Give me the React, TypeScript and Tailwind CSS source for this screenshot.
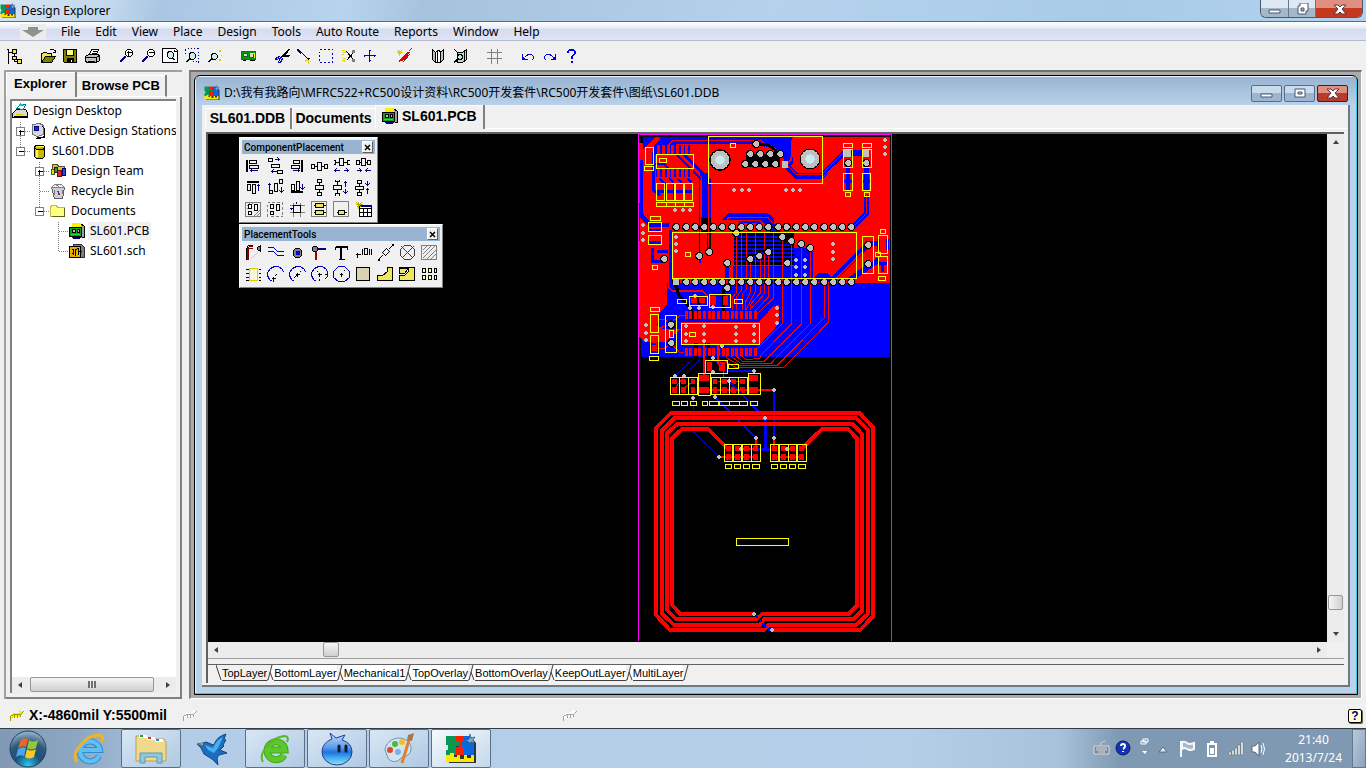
import type { ReactNode } from "react";

// [path, stroke, fill]
type Shape = [string, string, string?];

const K = "#000000";
const N = "#000080";
const G = "#808080";
const Y = "#f0e65a";

const uiFont = "font-['Noto_Sans','Noto_Sans_CJK_SC',sans-serif]";
const boldFont = "font-['Liberation_Sans',sans-serif] font-bold";

function Icon({ shapes, size = 16 }: { shapes: Shape[]; size?: number }) {
  return (
    <svg
      width={size}
      height={size}
      viewBox={`-0.5 -0.5 ${size} ${size}`}
      shapeRendering="crispEdges"
      className="shrink-0"
      aria-hidden
    >
      {shapes.map(([d, stroke, fill], i) => (
        <path key={i} d={d} stroke={stroke} fill={fill ?? "none"} />
      ))}
    </svg>
  );
}

const lens = "M7 3l2 -2h3l2 2v3l-2 2h-3l-2 -2z";

const toolIcons: Record<string, Shape[]> = {
  tree: [
    ["M2 0V15M0 1H2M2 4H6M8 5V13H11M8 9H6", K],
    ["M6 1h4v4h-4zM6 8h4v3h-4zM11 11h4v4h-4z", K, Y],
  ],
  open: [
    ["M1 14V5h1l1 -1h3l1 1h4v3", K, Y],
    ["M1 14l4 -6h10l-4 6z", K, "#808000"],
    ["M9 2l1 -1h3l2 2M15 1V4H12", K],
  ],
  save: [
    ["M1 1h13v13h-12l-1 -1z", K, "#808000"],
    ["M4 1h7v6h-7z", K, "#ffff80"],
    ["M5 14v-4h6v4M6 11v3M7 11v3", K, K],
    ["M9 11v2", "#fff"],
  ],
  print: [
    ["M5 6l2 -5h7l-2 5z", K, "#fff"],
    ["M1 8l3 -2h10l1 2v4l-3 2h-10l-1 -2z", K, "#c0c0c0"],
    ["M1 9h11l3 -2M8 3h4M7 5h4M12 9v5M3 13h7", K],
    ["M9 11h2", "#d0d000"],
  ],
  zoomIn: [
    [lens, K, "#fff"],
    ["M10 2v5M8 4h5", K],
    ["M7 8l-6 6M7 9l-5 5M6 8l-5 5", N],
  ],
  zoomOut: [
    [lens, K, "#fff"],
    ["M8 4h5", K],
    ["M7 8l-6 6M7 9l-5 5M6 8l-5 5", N],
  ],
  zoomPage: [
    ["M0 0h13l2 2v12h-15z", K, "#fff"],
    ["M5 4l2 -1h2l2 2v3l-2 2h-2l-2 -2zM10 9l3 3M10 10l2 2M12 1v2h2", K, "#c8f0f0"],
  ],
  zoomArea: [
    ["M3 0h1M6 0h1M9 0h1M12 0h2M14 3v1M14 6v1M14 9v1M14 12v2M11 13h1M8 13h1M1 0v2M1 4v1", N],
    ["M6 4h3l2 2v3l-2 2h-3l-1 -2v-3zM5 10l-4 4M5 11l-3 3", K, "#c8f0f0"],
  ],
  zoomPoint: [
    ["M6 5h3l2 2v2l-2 2h-3l-1 -2v-2zM5 10l-4 4M5 11l-3 3", K, "#c8f0f0"],
    ["M12 2h2M12 3h2M12 11h2M12 12h2M14 7h1", "#e0d000"],
  ],
  chip: [
    ["M1 3h14v8h-14z", "#008000", "#00a000"],
    ["M3 5h4v3h-4zM9 5h4v4h-4z", "#305030", "#d8d8d8"],
    ["M2 12h3M9 12h5", K],
    ["M9 5h4M14 4v5", "#ffff00"],
  ],
  cut: [
    ["M14 1l-7 7M15 1l-7 8M15 7h-5l-4 2M14 8h-5", K],
    ["M6 8l-4 1l-1 2h2l3 -2M6 9l-2 5h2l2 -4", "#0000c0"],
  ],
  probe: [
    ["M1 1l5 4M1 2l4 4M2 1l6 6", N],
    ["M7 6l5 5l1 -1M12 9v3", K],
    ["M10 11l-1 3M12 12v3M8 12h4M13 13h1", "#e0d800"],
  ],
  select: [["M1 1h2M5 1h2M9 1h2M13 1h1M14 4v2M14 8v2M14 12v2M11 14h-2M7 14h-2M3 14h-2M1 12v-2M1 8v-2M1 4v-1", "#0000c0"]],
  deselect: [
    ["M6 3l8 9M6 12l8 -9", K],
    ["M1 2h3M2 4h3M1 6h2M1 12h3M2 10h3M3 13h1", "#e0d800"],
    ["M12 2h2v2h-2zM12 11h2v2h-2z", G, G],
  ],
  move: [["M7 1V13M1 7H13M6 2h2M6 12h2M2 6v2M12 6v2", "#0000c0"]],
  wizard: [
    ["M3 13l8 -9M4 13l8 -9M4 12l6 -7M5 13l8 -9M6 12l7 -8", "#e00000"],
    ["M2 14l2 -3M12 3l3 -3M6 14l7 -8", "#404040"],
    ["M3 1v6M0 4h6M1 2l4 4M5 2l-4 4", "#d8d000"],
  ],
  book: [
    ["M2 1l3 3v10l-3 -3zM13 1l-3 3v10l3 -3z", K, "#c0c0c0"],
    ["M5 4l2 -2h2l1 2v10h-5z", K, "#fff"],
    ["M7 2v12", K],
  ],
  bookFind: [
    ["M2 1l3 3v10h5l4 -3v-10l-4 3h-5M14 1v10M12 3v9", K, "#d0d0d0"],
    ["M6 6h3l1 2v2l-2 1h-2l-1 -2zM5 10l-4 4M6 11l-4 3", K, "#a0f0f0"],
  ],
  grid: [["M5 0V15M11 0V15M0 4H15M0 10H15", G]],
  undo: [["M2 5v6h5M2 10l2 -1l2 -2l2 -1h3l2 2v2l-2 2M3 8v3M4 9v2", "#0000d8"]],
  redo: [["M13 5v6h-5M13 10l-2 -1l-2 -2l-2 -1h-3l-2 2v2l2 2M12 8v3M11 9v2", "#0000d8"]],
  help: [["M3 4v-1l2 -2h4l2 2v2l-3 3v2M4 4v-1l1 -1h4l1 1v2l-3 3v2M7 12v2M8 12v2", "#0000f0"]],
};

const toolGroups = [
  ["tree"],
  ["open", "save", "print"],
  ["zoomIn", "zoomOut", "zoomPage", "zoomArea", "zoomPoint"],
  ["chip"],
  ["cut", "probe", "select", "deselect", "move"],
  ["wizard"],
  ["book", "bookFind"],
  ["grid"],
  ["undo", "redo", "help"],
];

const componentIcons: Shape[][] = [
  [["M2 2v12M1 2v12M4 3h7v3h-7zM4 8h9v3h-9z", K], ["M5 13h7M5 13l2 -2M5 13l2 2", N]],
  [["M1 1h4v3h-4zM4 7h8v3h-8zM10 13h5v3h-5z", K], ["M7 2h5M10 0l2 2l-2 2M4 14h5M6 12l-2 2l2 2", N]],
  [["M13 2v12M12 2v12M4 3h6v3h-6zM2 8h8v3h-8z", K], ["M3 13h7M10 13l-2 -2M10 13l-2 2", N]],
  [["M0 7h3v4h-3zM6 5h4v8h-4zM13 7h3v4h-3zM3 9h3M10 9h3", K]],
  [["M6 1h4v7h-4zM0 3h2v4h-2M16 3h-2v4h2M2 5h4M10 5h4", K], ["M1 13h5M1 13l2 -2M1 13l2 2M10 13h5M15 13l-2 -2M15 13l-2 2", N]],
  [["M1 3h3v4h-3zM6 1h4v7h-4zM12 3h3v4h-3zM4 5h2M10 5h2", K], ["M1 13h5M6 13l-2 -2M6 13l-2 2M10 13h5M10 13l2 -2M10 13l2 2", N]],
  [["M1 2h12M1 3h12M2 5h3v6h-3zM7 5h3v9h-3z", K], ["M13 5v6M11 7l2 -2l2 2", N]],
  [["M2 11h3v3h-3zM7 4h3v8h-3zM12 0h3v4h-3z", K], ["M2 4v6M0 6l2 -2l2 2M14 7v6M12 11l2 2l2 -2", N]],
  [["M1 13h12M1 12h12M2 5h3v6h-3zM7 2h3v9h-3z", K], ["M13 4v6M11 8l2 2l2 -2", N]],
  [["M6 0h4v3h-4zM4 6h8v4h-8zM6 13h4v3h-4zM8 3v3M8 10v3", K]],
  [["M2 0v2h4v-2M0 6h8v4h-8zM2 16v-2h4v2M4 2v4M4 10v4", K], ["M12 2v5M10 4l2 -2l2 2M12 9v5M10 12l2 2l2 -2", N]],
  [["M2 1h4v3h-4zM0 7h8v3h-8zM2 13h4v3h-4zM4 4v3M4 10v3", K], ["M12 1v5M10 4l2 2l2 -2M12 9v5M10 11l2 -2l2 2", N]],
  [["M0 1h15v14h-15zM1 8l7 -7M8 15l7 -7M11 15l4 -4M1 5l4 -4", G], ["M3 3h3v4h-3zM9 3h3v6h-3zM3 10h3v3h-3z", K, "#fff"]],
  [["M0 1h2M4 1h3M9 1h3M14 1h1v2M15 5v3M15 10v3M15 15h-2M11 15h-3M6 15h-3M0 15v-3M0 10v-3M0 5v-2", G], ["M3 3h3v4h-3zM9 3h3v6h-3zM3 10h3v3h-3z", K]],
  [["M4 1v14M11 1v14M0 4h15M0 11h15", G], ["M4 4h7v7h-7z", K, "#f0f0f0"], ["M0 7h3M7 0v2M2 6v2", N]],
  [["M0 0h15v15h-15z", G, "#f0f0f0"], ["M4 2h8v4h-8zM4 9h8v4h-8zM2 4h2M12 4h2M2 11h2M12 11h2", K, Y]],
  [["M0 0h15v15h-15z", G, "#f0f0f0"], ["M5 9h6v4h-6zM3 11h2M11 11h2", K, Y]],
  [["M4 4h12v11h-12zM4 7h12M8 7v8M12 7v8M4 11h12", K, "#fff"], ["M4 4h12M4 5h12", N], ["M3 0v7M0 3h7M1 1l5 5M6 1l-5 5", "#b8b000"]],
];

const placementIcons: Shape[][] = [
  [["M2 15v-11l2 -2h3M3 15v-11h4", "#800000"], ["M1 15v-11l2 -3h4", K], ["M15 1l-3 2v2l3 2z", K, G], ["M12 8l-7 7", "#e8e000"]],
  [["M0 3h6l4 4h6M0 7h6l4 4h6", "#0000c0"]],
  [["M6 4h4l2 2v5l-2 2h-4l-2 -2v-5z", K, G], ["M7 7h3v3h-3z", "#0000c0", "#0000ff"]],
  [["M2 2h3l1 1v3l-1 1h-3l-1 -1v-3z", K, G], ["M6 4h8v1h-8z", N, N], ["M4 8v7h1v-7z", "#a00000"]],
  [["M2 2h12v3M2 2v3M8 2v13M7 2v13M5 15h6M2 3h12", K]],
  [["M0 10h5M2 8v5M7 4v6M9 4h3v6h-3zM14 4v6M16 4v6", K]],
  [["M1 15l4 -4M11 5l4 -4M5 8l4 -4l3 3l-4 4z", K], ["M0 15h2v1h-2M14 0h2v1", K]],
  [["M5 1h6l4 4v6l-4 4h-6l-4 -4v-6zM2 2l12 12M14 2l-12 12", "#404040"]],
  [["M0 1h15v14h-15z", G], ["M1 6l5 -5M1 10l9 -9M1 14l13 -13M5 15l10 -10M9 15l6 -6", G]],
  [["M4 2h8v12h-8z", "#d8d000", "#f8f8d8"], ["M0 3h3M0 7h3M0 11h3M0 14h3M13 3h2M13 7h2M13 11h2M13 14h2", K]],
  [["M5 15l-3 -2l-2 -4v-3l3 -4l4 -2h4l4 3l1 3", "#0000c0"], ["M4 12h4M6 10v5M7 10l2 -2", K]],
  [["M5 15l-3 -2l-2 -4v-3l3 -4l4 -2h4l4 3l1 3", "#0000c0"], ["M6 8h4M8 6v4M4 12l3 -3M10 6l1 -1", K]],
  [["M5 15l-3 -2l-2 -4v-3l3 -4l4 -2h4l4 3l1 3v4l-3 3", "#0000c0"], ["M6 8h4M8 6v4M13 8h2M8 12v2M6 4v1", K]],
  [["M5 0h6l5 5v6l-5 4h-6l-5 -4v-6z", "#0000c0"], ["M6 8h3M8 6v4M10 5l1 -1", K]],
  [["M1 1h13v13h-13z", K, "#d8d4b0"]],
  [["M0 14v-5h5l5 -4v-4h5v13z", K, Y]],
  [["M0 14v-5h5l4 -4v-3h-9v-1h15v13z", K, Y], ["M0 2v5h5l3 -4", K, Y]],
  [["M1 2h3v4h-3zM7 2h3v4h-3zM13 2h2v4h-2zM1 9h3v4h-3zM7 9h3v4h-3zM13 9h2v4h-2z", K, "#ffffb0"]],
];

function ProtelIcon({ size }: { size: number }) {
  return (
    <svg width={size} height={size} viewBox="0 0 32 32" className="shrink-0" aria-hidden>
      <path d="M3 4h23l5 6v20H4z" fill="#30343c" />
      <path d="M1 3h10v5h3v5h-3v9H1v-5h2v-5H1z" fill="#089850" />
      <path d="M11 3h8v6h-2v5h2v8h-8v-8h3V8h-3z" fill="#f82000" />
      <path d="M19 3h6l4 5v14H19v-8h-3V9h3z" fill="#0868e0" />
      <path d="M1 22h4v-2h4v4h3v-2h3v4h4v-4h3v3h4v-3h3v7H1z" fill="#ffe800" />
      <path d="M25 1l1 4 4-1-2 3 2 3-4-1-1 3-1-3-4-1 4-2z" fill="#7ca8d0" stroke="#344c68" strokeWidth="0.7" />
    </svg>
  );
}

function Arrow({ dir }: { dir: "left" | "right" | "up" | "down" }) {
  const d = {
    left: "M6 1L2 4L6 7z",
    right: "M2 1L6 4L2 7z",
    up: "M1 6L4 2L7 6z",
    down: "M1 2L4 6L7 2z",
  }[dir];
  return (
    <svg width="8" height="8" viewBox="0 0 8 8" aria-hidden>
      <path d={d} fill="#404040" />
    </svg>
  );
}

const docPcb: Shape[] = [
  ["M11 0l4 3v11h-3", K, "#a0a0a0"],
  ["M3 0h8v4h-8z", "#f8f000", "#f8f000"],
  ["M0 4h12v9h-12z", K, "#10a020"],
  ["M3 6h3v3h-3zM8 6h2v3h-2z", K, "#c0c0c0"],
  ["M1 11h9", "#20e040"],
  ["M2 14h9M3 15h7", N],
];

const treeIcons: Record<string, Shape[]> = {
  desktop: [
    ["M0 10l4 -4h9l2 3v5h-15z", K, "#d8d8d8"],
    ["M4 5l4 -4h5l-2 5z", "#008080", "#fff"],
    ["M8 0l3 2h-4z", "#00c8d8"],
    ["M3 11h7", "#d0c800"],
    ["M1 13h13", K],
  ],
  stations: [
    ["M1 1l7 -1l4 2v9l-6 2l-5 -2z", "#707078", "#d8d8e0"],
    ["M3 3h4v4h-4z", N, "#1030e0"],
    ["M11 3l2 2v8l-5 2h-4M5 14h8", K],
  ],
  db: [
    ["M3 3l2 -1h6l2 1v10l-2 2h-6l-2 -2z", K, "#c8b800"],
    ["M4 3h8M6 6v7M5 6v7", "#fff860"],
    ["M3 5l3 1h5l2 -1", K],
  ],
  team: [
    ["M2 1h5l1 2h6v5h-12z", "#605020", "#d8c040"],
    ["M1 6h3v5h-3z", "#207030", "#f0e000"],
    ["M4 4h3v5h-3z", "#202020", "#20a040"],
    ["M7 7h4v6h-4z", "#800000", "#e82020"],
    ["M12 5h3v7h-3z", N, "#2050d8"],
  ],
  bin: [
    ["M1 4h13l-2 11h-8z", "#606060", "#d0d0d0"],
    ["M1 4l3 -3h7l3 3zM6 2l3 1M4 6v5M12 6v4", "#808080", "#f0f0f0"],
    ["M6 8h2v2", "#2040e0"],
    ["M9 10l-1 2", "#e02020"],
  ],
  folder: [["M0 3h1v-1h5l1 2h7v9h-14z", "#c0b850", "#ffff80"], ["M14 4v9h-13", "#606020"]],
  pcb: docPcb,
  sch: [
    ["M4 1h8l3 3v10h-11z", "#303030", "#808080"],
    ["M0 3h11v11h-11z", K, "#e8b000"],
    ["M2 6h2v5M6 12v-6l3 -1v6M2 10h1M9 8h3", K],
  ],
};

interface TreeRow {
  label: string;
  icon: string;
  cells: string[];
  sign?: "+" | "-";
  selected?: boolean;
}

const treeRows: TreeRow[] = [
  { label: "Design Desktop", icon: "desktop", cells: [] },
  { label: "Active Design Stations", icon: "stations", cells: ["tee"], sign: "+" },
  { label: "SL601.DDB", icon: "db", cells: ["end"], sign: "-" },
  { label: "Design Team", icon: "team", cells: ["", "tee"], sign: "+" },
  { label: "Recycle Bin", icon: "bin", cells: ["", "tee"] },
  { label: "Documents", icon: "folder", cells: ["", "end"], sign: "-" },
  { label: "SL601.PCB", icon: "pcb", cells: ["", "", "tee"], selected: true },
  { label: "SL601.sch", icon: "sch", cells: ["", "", "end"] },
];

function TreeCell({ kind, sign }: { kind: string; sign?: string }) {
  return (
    <svg width="19" height="20" viewBox="-0.5 -0.5 19 20" shapeRendering="crispEdges" className="shrink-0" aria-hidden>
      {kind && (
        <path
          d={kind === "tee" ? "M8 0V20M8 10H18" : "M8 0V10H18"}
          stroke="#808080"
          strokeDasharray="1 1"
          fill="none"
        />
      )}
      {sign && <path d="M4 6h8v8h-8z" stroke="#808080" fill="#fff" />}
      {sign && <path d={sign === "+" ? "M6 10h5M8 8v5" : "M6 10h5"} stroke="#000" />}
    </svg>
  );
}

function HScroll({ grip, thumb }: { grip?: boolean; thumb: string }) {
  return (
    <div className="flex h-4 min-w-0 flex-1 items-center justify-between bg-[#ececec] px-1">
      <button aria-label="Scroll left"><Arrow dir="left" /></button>
      <div className="relative h-4 flex-1">
        <div className={`absolute top-0 flex h-[15px] items-center justify-center rounded-xs border border-[#979797] bg-linear-to-b from-[#f6f6f6] to-[#cfcfd2] ${thumb}`}>
          {grip && <span className="h-[7px] w-2 border-x-2 border-[#707070] bg-[linear-gradient(90deg,#eee_1px,#707070_1px,#707070_3px,#eee_3px)]" />}
        </div>
      </div>
      <button aria-label="Scroll right"><Arrow dir="right" /></button>
    </div>
  );
}

function ExplorerPanel() {
  return (
    <aside className="flex w-[178px] shrink-0 flex-col border-t-2 border-l-2 border-[#a0a0a0]">
      <div className={`flex h-[25px] shrink-0 items-end text-[13px] ${boldFont}`}>
        <button className="flex h-[25px] items-center border-r-2 border-[#808080] px-2 pb-0.5 shadow-[inset_1px_1px_0_#fff]">Explorer</button>
        <button className="flex h-[22px] items-center border-r-2 border-b border-r-[#808080] border-b-white px-[5px] shadow-[inset_0_1px_0_#fff]">Browse PCB</button>
        <span className="flex-1 border-b border-white" />
      </div>
      <div className="flex min-h-0 flex-1 flex-col border-r-2 border-b-2 border-[#808080] px-1 pt-0.5 pb-1">
        <div className="flex min-h-0 flex-1 flex-col overflow-hidden border-t-2 border-l-2 border-[#808080] bg-white">
          <ul className={`flex-1 overflow-hidden text-[12px] ${uiFont}`}>
            {treeRows.map((row) => (
              <li key={row.label} className="flex h-5 items-center">
                {row.cells.map((kind, i) => (
                  <TreeCell key={i} kind={kind} sign={i === row.cells.length - 1 ? row.sign : undefined} />
                ))}
                <Icon shapes={treeIcons[row.icon]} />
                <button className={`ml-[3px] px-0.5 whitespace-nowrap ${row.selected ? "bg-[#f0f0f0]" : ""}`}>{row.label}</button>
              </li>
            ))}
          </ul>
          <div className="flex h-4 shrink-0">
            <HScroll grip thumb="left-[6px] right-[10px]" />
          </div>
        </div>
      </div>
    </aside>
  );
}

function Palette({ title, icons, cols }: { title: string; icons: Shape[][]; cols: string }) {
  return (
    <div className="border border-white border-r-[#808080] border-b-[#808080] bg-[#f0f0f0] p-0.5">
      <div className="flex h-[14px] items-center justify-between bg-[#99b4d1] pr-0.5 pl-0.5">
        <span className="font-['Roboto',sans-serif] text-[10px] font-medium">{title}</span>
        <button aria-label={`Close ${title}`} className="flex h-3 w-[11px] items-center justify-center border border-white border-r-[#606060] border-b-[#606060] bg-[#f0f0f0]">
          <svg width="7" height="7" viewBox="0 0 7 7" aria-hidden>
            <path d="M1 1l5 5M6 1l-5 5" stroke="#000" strokeWidth="1.5" />
          </svg>
        </button>
      </div>
      <div className={`grid ${cols}`}>
        {icons.map((shapes, i) => (
          <button key={i} aria-label={`${title} ${i + 1}`} className="flex h-[22px] w-[22px] items-center justify-center">
            <Icon shapes={shapes} size={17} />
          </button>
        ))}
      </div>
    </div>
  );
}

// Board artwork. Three drawing units make one screen pixel.
const silkTop = [
  [29, 52, 24, 52], [25, 109, 28, 13], [61, 73, 111, 42], [70, 86, 21, 11],
  [61, 160, 25, 51], [90, 160, 25, 51], [118, 160, 24, 51], [145, 160, 25, 51],
  [61, 217, 29, 12], [90, 217, 28, 12], [118, 217, 28, 12], [146, 217, 27, 12],
  [283, 40, 16, 12], [217, 19, 342, 141], [622, 40, 28, 12], [679, 40, 28, 12],
  [622, 58, 28, 53], [679, 58, 27, 53], [622, 130, 28, 52], [679, 130, 25, 52],
  [628, 187, 16, 12], [685, 187, 16, 12], [43, 259, 31, 12], [37, 277, 40, 26],
  [37, 316, 40, 27], [49, 406, 16, 12], [148, 367, 16, 13], [109, 307, 552, 137],
  [679, 319, 34, 111], [733, 298, 16, 13], [728, 316, 26, 53], [718, 367, 16, 12],
  [728, 379, 26, 52], [727, 439, 20, 12],
];

const silkMiddle = [
  [124, 58, 28, 12], [160, 49, 54, 28], [220, 43, 64, 39], [295, 58, 25, 12],
  [43, 82, 28, 12], [43, 103, 25, 53], [43, 166, 25, 54], [40, 229, 28, 13],
  [88, 106, 34, 111], [100, 151, 13, 22], [136, 130, 234, 63], [160, 157, 19, 12],
  [209, 241, 65, 39], [276, 253, 32, 12],
  [103, 292, 27, 51], [130, 292, 28, 51], [158, 292, 27, 51], [187, 280, 36, 65],
  [226, 292, 26, 51], [252, 292, 27, 51], [279, 292, 28, 51], [307, 292, 27, 51], [338, 280, 36, 63],
  [109, 364, 22, 12], [136, 364, 19, 12], [163, 364, 19, 12], [199, 364, 16, 12],
  [220, 364, 28, 12], [250, 364, 31, 12], [281, 364, 30, 12], [311, 364, 24, 12], [343, 364, 22, 12],
];

const silkBottom = [
  [265, 133, 25, 51], [292, 133, 25, 51], [319, 133, 26, 51], [347, 133, 26, 51],
  [403, 133, 25, 51], [430, 133, 26, 51], [457, 133, 25, 51], [484, 133, 27, 51],
  [268, 193, 19, 12], [295, 193, 19, 12], [322, 193, 19, 12], [349, 193, 22, 12],
  [406, 193, 19, 12], [433, 193, 19, 12], [460, 193, 19, 12], [487, 193, 22, 12],
  [301, 415, 157, 21],
];

const headerX = [120, 150, 177, 204, 231, 258, 288, 315, 342, 369, 397, 426, 452, 480, 507, 534, 564, 591, 618, 645];
const chipPadX = [147, 160, 175, 187, 201, 215, 229, 243, 257, 270, 284, 298, 312, 326, 340, 354];
const smallPadX = [64, 78, 92, 106, 120, 134, 148, 162];

const holes = [
  [342, 72], [372, 72], [402, 72], [432, 72], [327, 102], [357, 102], [387, 102], [417, 102],
  [360, 42], [189, 378], [219, 366], [273, 399], [300, 309], [438, 321], [465, 333], [495, 342],
  [522, 354], [396, 366], [369, 378], [342, 387], [453, 399], [84, 387], [636, 99], [690, 99],
  [696, 345], [696, 402], [273, 474], [105, 584], [105, 639],
];

const vias = [
  [747, 30], [747, 51], [747, 72], [294, 180], [318, 180], [339, 180], [450, 180], [471, 180], [492, 180],
  [117, 240], [141, 240], [162, 240], [21, 285], [21, 309], [21, 330], [120, 321], [120, 342], [120, 363],
  [591, 342], [591, 366], [591, 387], [480, 390], [480, 411], [480, 435], [507, 390], [507, 411], [507, 435],
  [177, 498], [162, 534], [189, 534], [231, 531], [423, 534], [423, 555], [423, 579],
  [30, 585], [30, 609], [30, 630], [150, 588], [150, 612], [150, 633], [204, 588], [204, 612], [204, 633],
  [300, 591], [300, 612], [300, 633], [354, 588], [354, 612], [354, 633], [258, 648], [231, 684], [231, 726],
  [117, 738], [144, 738], [354, 722], [279, 753], [414, 780], [171, 804], [237, 801], [387, 864],
  [360, 924], [414, 924], [315, 957], [453, 957], [249, 981], [354, 1452], [408, 1500],
];

// octagonal pad, eighteen units across
const padPath = (x: number, y: number) => `M${x - 3} ${y - 9}h6l6 6v6l-6 6h-6l-6 -6v-6z`;

function Silk({ boxes }: { boxes: number[][] }) {
  return (
    <g fill="none" stroke="#ffff00" strokeWidth="3">
      {boxes.map(([x, y, w, h], i) => (
        <rect key={i} x={x} y={y} width={w} height={h} />
      ))}
    </g>
  );
}

function Board() {
  return (
    <svg
      width="254"
      height="507"
      viewBox="6 12 762 1521"
      shapeRendering="crispEdges"
      className="absolute top-0 left-[430px]"
      role="img"
      aria-label="SL601 board"
    >
      {/* copper pours */}
      <path d="M15 450H761V681H15z" fill="#0000ff" />
      <path d="M12 21H761V459H92V525L70 550V570L62 585L80 597H136V575H370L412 528L430 524V580L370 645H136V597L85 637H25L9 620V60z" fill="#ff0000" />
      <path d="M20 21H470V38L455 45H100L55 78V21z" fill="#0000ff" />
      <path d="M12 66L58 21H20V60zM12 90H20V250L45 280H100V292H40L12 262z" fill="#0000ff" />
      <path d="M385 21H470V102L452 118L440 80L415 50H385z" fill="#0000ff" />
      <path d="M12 18H761V21H12zM12 21H20V40H12zM12 220V332H9V220z" fill="#000" />
      <path d="M12 66L20 58L58 21H66V30L35 62V80L12 96z" fill="#ff0000" />

      {/* upper left circuit */}
      <g fill="none" stroke="#ff0000" strokeWidth="6">
        <path d="M35 75V60L72 24" />
        <path d="M92 66V50L110 32H375L388 46V92" strokeWidth="4" />
        <path d="M120 48V44H350" strokeWidth="3" />
        <path d="M470 24L466 90L450 106" />
      </g>
      <g fill="none" stroke="#0000ff">
        <path d="M52 66V180L72 196M58 102H85L96 115M122 74L192 142V400M144 74L220 148V370" strokeWidth="8" />
        <path d="M206 130V265" strokeWidth="28" />
        <path d="M62 184H168" strokeWidth="10" />
        <path d="M68 142L84 160M96 142L112 158M122 142L138 158M150 142L166 158" strokeWidth="7" />
        <path d="M17 90V240" strokeWidth="9" />
      </g>
      <path d="M188 264H224V306H188zM188 306H196V372H188zM212 306H225V360H212z" fill="#000" />
      <path d="M193 150V370M217 155V350M134 78L196 142V260" fill="none" stroke="#ff0000" strokeWidth="3" />
      <g fill="none" stroke="#0000ff" strokeWidth="5">
        {smallPadX.map((x) => (
          <path key={x} d={`M${x - 3} 46v26M${x - 3} 118v24`} />
        ))}
      </g>
      <g fill="#ff0000">
        {smallPadX.map((x) => (
          <path key={x} d={`M${x} 46h8v27h-8zM${x} 118h8v28h-8z`} />
        ))}
      </g>
      <path d="M86 160v51M114 160v51M142 160v51" stroke="#0000ff" strokeWidth="5" />

      {/* right hand tracks */}
      <g fill="none" strokeLinejoin="round">
        <path d="M455 112L482 138H556L624 70H696" stroke="#0000ff" strokeWidth="18" />
        <path d="M455 108L482 134H556L624 66M560 142L628 78H690" stroke="#ff0000" strokeWidth="3" />
        <path d="M636 110V180M692 110V180M692 195V250L652 290" stroke="#0000ff" strokeWidth="14" />
        <path d="M692 195V250L652 290" stroke="#ff0000" strokeWidth="3" />
        <path d="M622 154H650M679 154H706" stroke="#0000ff" strokeWidth="10" />
        <path d="M590 450L700 340H728M640 450L728 390" stroke="#0000ff" strokeWidth="16" />
        <path d="M600 445L680 365M620 450L690 400M700 330H740" stroke="#ff0000" strokeWidth="3" />
        <path d="M728 326V360M754 326V360M728 400H754M740 405V425" stroke="#0000ff" strokeWidth="8" />
        <path d="M40 300H75M40 338H75M50 355V395H80M62 365H105" stroke="#0000ff" strokeWidth="9" />
        <path d="M104 300V470L118 482H200L215 496" stroke="#0000ff" strokeWidth="10" />
        <path d="M98 300V472L108 483H200L215 498" stroke="#ff0000" strokeWidth="4" />
      </g>

      {/* traces under the header socket */}
      <path d="M294 309H475V405H294z" fill="#000" />
      <path d="M475 355H530V456H290V408H475zM440 309L415 280V265L395 250H278L258 270H300L310 280H380L405 309z" fill="#0000ff" />
      <path d="M268 396H280V450H268zM530 450L545 430H575L590 446V456H530z" fill="#0000ff" />
      <g stroke="#0000ff" strokeWidth="6">
        <path d="M294 322H430M294 334H445M294 346H465M294 358H475M294 370H475M294 382H475M294 394H475" />
      </g>
      <path d="M258 285L280 262H395L412 280M275 285L292 270H370L385 285" fill="none" stroke="#ff0000" strokeWidth="3" />
      <g fill="none" stroke="#ff0000" strokeWidth="3">
        <path d="M302 312V490L290 500V540M316 306V480L302 500V540M330 306V480L318 492V540M342 387V490L328 515V540M358 306V485L330 540" />
        <path d="M372 378V490L342 525V540M386 306V490L346 535M398 366V500L356 545M412 306V505L362 552" />
        <path d="M438 321V582L360 660M466 333V582L372 678V684L345 688H328L312 670V655M496 342V582L385 694H320L298 676V655" />
        <path d="M522 354V582L404 701H315L286 680V655M566 456V562L425 705H310L272 684V655M578 456V576L442 713H300L262 690" />
      </g>

      {/* reader chip */}
      <path d="M120 468L130 500L165 535V570M188 505V570M262 470V570M206 640V700M180 640V680M218 640V690" stroke="#000" strokeWidth="10" fill="none" />
      <path d="M62 560V590M62 620V665M50 568H85L100 580M60 600L95 585M55 655H85L105 640L130 667H145M110 572L135 556H150" stroke="#ff0000" strokeWidth="4" fill="none" />
      <g fill="#ff0000">
        <path d="M165 504h18v16h-18zM190 504h16v16h-16zM222 497h18v28h-18zM261 497h15v28h-15zM48 558h16v18h-16zM48 584h16v18h-16zM48 622h16v16h-16zM48 646h16v18h-16z" />
        {chipPadX.map((x) => (
          <path key={x} d={`M${x} 543h9v24h-9zM${x} 654h9v24h-9z`} />
        ))}
        <path d="M214 696h14v27h-14zM248 696h18v28h-18z" />
        <path d="M107 746h16v16h-16zM135 746h15v16h-15zM165 746h12v16h-12zM190 735h29v18h-29zM230 746h13v16h-13zM257 746h15v16h-15zM285 746h15v16h-15zM312 746h15v16h-15zM339 735h27v18h-27z" />
        <path d="M107 771h16v18h-16zM135 771h15v18h-15zM165 771h12v18h-12zM190 771h30v18h-30zM230 771h13v18h-13zM257 771h15v18h-15zM285 771h15v18h-15zM312 771h15v18h-15zM339 771h27v18h-27z" />
      </g>
      <path d="M178 680L117 738M190 680V690L144 738M171 790V905L249 981" stroke="#0000c0" strokeWidth="3" fill="none" />
      <path d="M279 753L387 864V960M270 722H354M237 801L360 924M414 780V924M231 684L255 708" stroke="#0000ff" strokeWidth="6" fill="none" />
      <path d="M388 860V958M365 958H410" stroke="#0000ff" strokeWidth="9" fill="none" />
      <path d="M204 640V695M246 640V700L262 718V740M190 780H414M245 754H320M204 690V735" stroke="#ff0000" strokeWidth="5" fill="none" />
      <path d="M144 738L117 775M171 754L140 778" stroke="#ff0000" strokeWidth="3" fill="none" />

      {/* antenna coil */}
      <g transform="translate(0 810)" fill="none" stroke="#ff0000" strokeWidth="12" strokeLinejoin="round">
        <path d="M354 642H134L108 615V115L138 87H216L272 143" />
        <path d="M500 143L558 87H636L663 115V617L638 642H378L362 657H120L93 630V100L124 72H650L678 102V632L652 657H386L370 675H114L78 640V92L116 54H660L696 90V642L660 675H398L384 690H102L60 645V84L105 39H670L711 82V650L672 690H408" />
        <path d="M360 114V140M414 114V140" strokeWidth="6" />
        <path d="M249 171H360M414 171H500M300 147H360M440 147H470" strokeWidth="6" />
        <path d="M354 642L366 654M369 657L377 665M380 670L390 682M395 688H406" stroke="#0000ff" strokeWidth="8" />
      </g>
      <g fill="#ff0000" transform="translate(0 810)">
        {[270, 297, 323, 350, 408, 435, 461, 488].map((x) => (
          <path key={x} d={`M${x} 138h15v15h-15zM${x} 162h15v18h-15z`} />
        ))}
      </g>

      {/* drilled pads */}
      <g fill="#000">
        {holes.map(([x, y], i) => <circle key={i} cx={x} cy={y} r="13" />)}
        {headerX.map((x) => <circle key={x} cx={x} cy={291} r="13" />)}
        {headerX.map((x) => <circle key={x} cx={x} cy={456} r="13" />)}
        <circle cx="252" cy="90" r="32" />
        <circle cx="522" cy="87" r="31" />
        <path d="M365 42L395 44L418 60V90" fill="none" stroke="#000" strokeWidth="8" />
        <path d="M330 72H432V112H330z" />
      </g>
      <g fill="#c0c0c0">
        {holes.map(([x, y], i) => <path key={i} d={padPath(x, y)} />)}
        {headerX.map((x) => <path key={x} d={padPath(x, 291)} />)}
        {headerX.slice(1).map((x) => <path key={x} d={padPath(x, 456)} />)}
        <path d="M111 447h18v18h-18zM438 93h18v22h-18zM624 60h21v22h-21zM679 60h21v22h-21z" />
        <circle cx="252" cy="90" r="28" />
        <circle cx="522" cy="87" r="28" />
        {vias.map(([x, y], i) => (
          <path key={i} d={`M${x - 3} ${y - 6}h6v3h3v6h-3v3h-6v-3h-3v-6h3z`} />
        ))}
      </g>
      <circle cx="252" cy="90" r="14" fill="#c8ecec" />
      <circle cx="522" cy="87" r="14" fill="#c8ecec" />

      <Silk boxes={silkTop} />
      <g transform="translate(0 450)"><Silk boxes={silkMiddle} /></g>
      <g transform="translate(0 810)"><Silk boxes={silkBottom} /></g>
      <path d="M7 1540V13H766V1540" fill="none" stroke="#ff00ff" strokeWidth="3" />
    </svg>
  );
}

function CaptionGlyph({ kind }: { kind: string }) {
  const d: Record<string, ReactNode> = {
    min: <path d="M2 7h11v3H2z" fill="#fff" stroke="#4a5468" />,
    max: <path d="M3 2h10v8H3zM6 5h4v2H6z" fill="#fff" stroke="#4a5468" fillRule="evenodd" />,
    restore: <path d="M5 0h8v8h-2v3H3V3h2zM6 5h3v3H6z" fill="#fff" stroke="#4a5468" fillRule="evenodd" />,
    close: <path d="M2 2h4l2 2 2-2h4l-4 4 4 5h-4L8 9l-2 2H2l4-5z" fill="#fff" stroke="#58354a" />,
  };
  return (
    <svg width="15" height="12" viewBox="0 0 15 12" aria-hidden>
      {d[kind]}
    </svg>
  );
}

const layers = ["TopLayer", "BottomLayer", "Mechanical1", "TopOverlay", "BottomOverlay", "KeepOutLayer", "MultiLayer"];

function LayerTabs() {
  return (
    <div className="mt-[5px] flex h-[19px] shrink-0 items-start border-t border-[#606060] pl-2 font-['Liberation_Sans',sans-serif] text-[11px] text-black">
      <svg width="6" height="16" viewBox="0 0 6 16" aria-hidden><path d="M0 0L5 15" stroke="#404040" /></svg>
      {layers.map((layer, i) => (
        <div key={layer} className="flex">
          <button className={`h-4 border-b border-[#404040] leading-4 ${i === 0 ? "bg-[#f0f0f0]" : "bg-white"}`}>{layer}</button>
          <svg width="7" height="16" viewBox="0 0 7 16" aria-hidden>
            {i < layers.length - 1 && <path d="M5 0h2v16L4 8z" fill="#fff" />}
            <path d={i < layers.length - 1 ? "M0 15h1L5 0M3 7L6 15" : "M0 15h1L5 0"} stroke="#404040" fill="none" />
          </svg>
        </div>
      ))}
    </div>
  );
}

function ChildWindow() {
  const captionBtn = "flex h-[17px] w-[31px] items-center justify-center rounded-xs border";
  return (
    <section className="flex min-h-0 min-w-0 flex-1 flex-col rounded-t-md border border-black bg-[#b9d1ea] px-[7px] pb-[7px] shadow-[inset_-1px_-1px_0_#38c8e8,inset_1px_1px_0_#e8f2fc]">
      <header className="-mx-[6px] mt-px flex h-7 shrink-0 items-center bg-linear-to-b from-[#99b4d1] to-[#b9d1ea] px-2 pt-1">
        <ProtelIcon size={16} />
        <h2 className={`ml-1 flex-1 text-[12px] whitespace-nowrap ${uiFont}`}>
          D:\我有我路向\MFRC522+RC500设计资料\RC500开发套件\RC500开发套件\图纸\SL601.DDB
        </h2>
        <div className="flex gap-[2px]">
          <button aria-label="Minimize document" className={`${captionBtn} border-[#5a6c88] bg-linear-to-b from-[#c8daec] from-50% to-[#9cb6d2] to-50%`}><CaptionGlyph kind="min" /></button>
          <button aria-label="Maximize document" className={`${captionBtn} border-[#5a6c88] bg-linear-to-b from-[#c8daec] from-50% to-[#9cb6d2] to-50%`}><CaptionGlyph kind="max" /></button>
          <button aria-label="Close document" className={`${captionBtn} border-[#501818] bg-linear-to-b from-[#dc9080] from-50% to-[#b83c28] to-50%`}><CaptionGlyph kind="close" /></button>
        </div>
      </header>

      <div className="flex min-h-0 flex-1 flex-col border-r-2 border-b-2 border-[#707880] bg-[#f0f0f0]">
        <div className={`flex h-6 shrink-0 items-end pl-[3px] text-[14px] ${boldFont}`}>
          <button className="h-[21px] w-[87px] border-r-2 border-r-[#808080] text-center shadow-[inset_1px_1px_0_#fff]">SL601.DDB</button>
          <button className="h-[21px] w-[83px] text-center shadow-[inset_1px_1px_0_#fff]">Documents</button>
          <button className="flex h-6 w-[110px] items-center gap-1 border-r-2 border-r-[#808080] pb-0.5 pl-[7px] shadow-[inset_1px_1px_0_#fff]">
            <Icon shapes={docPcb} />
            SL601.PCB
          </button>
          <span className="h-px flex-1 bg-white" />
        </div>
        <div className="flex min-h-0 flex-1 flex-col px-1 pt-[3px] pb-[2px]">
          <div className="flex min-h-0 flex-1 flex-col border-t-2 border-l-2 border-[#606060]">
            <div className="flex min-h-0 flex-1">
              <div className="relative min-w-0 flex-1 overflow-hidden bg-black">
                <Board />
                <div className="absolute top-[3px] left-[31px] flex flex-col items-start gap-px">
                  <Palette title="ComponentPlacement" icons={componentIcons} cols="grid-cols-[repeat(6,22px)] pr-px" />
                  <Palette title="PlacementTools" icons={placementIcons} cols="grid-cols-[repeat(9,22px)]" />
                </div>
              </div>
              <div className="flex w-[17px] shrink-0 flex-col items-center justify-between bg-[#ececec] py-1">
                <button aria-label="Scroll up"><Arrow dir="up" /></button>
                <span className="flex-1" />
                <div className="mb-5 h-[15px] w-[15px] rounded-xs border border-[#979797] bg-linear-to-r from-[#f6f6f6] to-[#cfcfd2]" />
                <button aria-label="Scroll down"><Arrow dir="down" /></button>
              </div>
            </div>
            <div className="flex h-[17px] shrink-0 items-center border-b border-[#a0a0a0] pr-[17px]">
              <HScroll thumb="left-[103px] w-4" />
            </div>
            <LayerTabs />
          </div>
        </div>
      </div>
    </section>
  );
}

function StatusArrow({ color, shadow }: { color: string; shadow: string }) {
  return (
    <svg width="16" height="14" viewBox="-0.5 -0.5 16 14" shapeRendering="crispEdges" className="shrink-0" aria-hidden>
      <path d="M1 10V6l3-3h5V0l5 3-3 4H4z" fill={color} />
      <path d="M1 11V7l3-2h7l3-3M5 5v3M8 5v3M11 5v2" stroke={shadow} fill="none" />
    </svg>
  );
}

function TaskButton({ label, open, active, children }: { label: string; open?: boolean; active?: boolean; children: ReactNode }) {
  const frame = active
    ? "border-[#5a7088] bg-linear-to-br from-[#f4f9fd] to-[#c4d8ea]"
    : open
      ? "border-[#5a7088] bg-linear-to-br from-[#d8e7f5] to-[#b0c9e2]"
      : "border-transparent";
  return (
    <button aria-label={label} className={`flex h-[39px] w-[60px] items-center justify-center rounded-xs border ${frame}`}>
      {children}
    </button>
  );
}

function Taskbar() {
  return (
    <footer className="flex h-10 shrink-0 items-center border-t border-[#303c48] bg-[linear-gradient(90deg,#8199b4_0,#8ea8c4_80px,#b3cde8_180px,#b5cfe9_900px,#a8c2dc_1060px,#8099b3_1120px,#8099b3_100%)]">
      <button aria-label="Start" className="flex w-[59px] justify-center pr-1">
        <svg width="38" height="38" viewBox="0 0 38 38" aria-hidden>
          <defs>
            <radialGradient id="orb" cx="0.5" cy="0.95" r="0.9">
              <stop offset="0" stopColor="#28c8f0" />
              <stop offset="0.4" stopColor="#1c5078" />
              <stop offset="0.7" stopColor="#305878" />
              <stop offset="1" stopColor="#8cacc4" />
            </radialGradient>
          </defs>
          <circle cx="19" cy="19" r="18" fill="url(#orb)" stroke="#244460" />
          <path d="M12 10q4-3 7-1l-2 8q-3-2-8 1z" fill="#f06428" />
          <path d="M20 10q4 3 9 0l-2 8q-5 3-9 0z" fill="#90c838" />
          <path d="M9 19q4-3 8-1l-2 8q-4-2-8 1z" fill="#48a8e8" />
          <path d="M18 19q4 3 9 0l-2 8q-5 3-9 0z" fill="#fcc828" />
        </svg>
      </button>
      <nav className="flex flex-1 gap-[2px]" aria-label="Taskbar">
        <TaskButton label="Internet Explorer">
          <svg width="34" height="34" viewBox="0 0 34 34" aria-hidden>
            <path d="M27 24a10 10 0 1 1 1-6H10" fill="none" stroke="#2c8cd0" strokeWidth="6" />
            <path d="M27 24a10 10 0 1 1 1-6H10" fill="none" stroke="#60c0f4" strokeWidth="4" />
            <path d="M5 30C-2 22 12 4 26 3c6 0 5 4 3 7" fill="none" stroke="#f0b420" strokeWidth="3" />
          </svg>
        </TaskButton>
        <TaskButton label="Windows Explorer" open>
          <svg width="34" height="32" viewBox="0 0 34 32" aria-hidden>
            <path d="M2 3h10l2 3h16l2 3v19H2z" fill="#f0d88c" stroke="#c0a050" />
            <path d="M5 2h8v3H5zM13 4h8v3h-8zM21 6h8v3h-8z" fill="#fff" />
            <path d="M6 2h3v2H6z" fill="#20a040" />
            <path d="M14 4h3v2h-3z" fill="#d83020" />
            <path d="M22 6h3v2h-3z" fill="#3080e0" />
            <path d="M6 30V20h22v10h-5v-6H11v6z" fill="#90c8e0" stroke="#5898b8" />
          </svg>
        </TaskButton>
        <TaskButton label="Thunder">
          <svg width="34" height="32" viewBox="0 0 34 32" aria-hidden>
            <path d="M1 11l6-1 3-1 5 2 3 1Q20 4 30 1l-2 5 2 1-3 5 1 1-4 4 7 3-8 2-2 3 1 7-6-6-8-5-3-6z" fill="#1c6cc0" stroke="#184878" />
            <path d="M9 12l8 3q3-8 10-11l-5 11-4 5-6-3z" fill="#48b0f0" />
            <path d="M1 11l6-1v2z" fill="#d0a860" />
          </svg>
        </TaskButton>
        <TaskButton label="Browser" open>
          <svg width="34" height="34" viewBox="0 0 34 34" aria-hidden>
            <path d="M26 23a9 9 0 1 1 1-5H11" fill="none" stroke="#40a818" strokeWidth="7" />
            <path d="M26 23a9 9 0 1 1 1-5H11" fill="none" stroke="#5cc82c" strokeWidth="5" />
            <path d="M5 30C0 22 12 6 26 4c5 0 4 4 3 6" fill="none" stroke="#58b828" strokeWidth="2" />
          </svg>
        </TaskButton>
        <TaskButton label="Messenger" open>
          <svg width="34" height="34" viewBox="0 0 34 34" aria-hidden>
            <defs>
              <linearGradient id="ball" x1="0" y1="0" x2="0" y2="1">
                <stop offset="0" stopColor="#c4dcfa" />
                <stop offset="0.45" stopColor="#5c9cec" />
                <stop offset="0.6" stopColor="#1c74e0" />
                <stop offset="1" stopColor="#84ecfc" />
              </linearGradient>
            </defs>
            <path d="M10 1l6 5 9-3-3 5q10 3 10 12a15 13 0 0 1-30 0Q2 11 12 7z" fill="url(#ball)" stroke="#283c90" />
            <path d="M19 14v5M26 14v5" stroke="#10182c" strokeWidth="3" strokeLinecap="round" />
          </svg>
        </TaskButton>
        <TaskButton label="Paint" open>
          <svg width="34" height="34" viewBox="0 0 34 34" aria-hidden>
            <path d="M3 18C4 8 16 3 24 8c7 4 6 12 2 15s-6 1-8 4-9 4-12-1z" fill="#d0e4f0" stroke="#7094b0" />
            <circle cx="8" cy="18" r="3" fill="#e04828" />
            <circle cx="13" cy="12" r="3" fill="#50b838" />
            <circle cx="20" cy="10" r="3" fill="#f0c020" />
            <circle cx="16" cy="20" r="3" fill="#80b0d8" />
            <path d="M20 31L27 8" stroke="#e08030" strokeWidth="3" />
            <path d="M25 8l1-5 6-2-2 8z" fill="#a87850" />
          </svg>
        </TaskButton>
        <TaskButton label="Design Explorer" open active>
          <ProtelIcon size={32} />
        </TaskButton>
      </nav>
      <div className="flex items-center text-white">
        <svg width="172" height="24" viewBox="0 0 172 24" aria-hidden>
          <path d="M1 9h15v8H1zM3 11h11M3 13h11M5 15h7M8 9V6l4-2" stroke="#d8dce0" fill="#7c8894" />
          <circle cx="30" cy="11" r="7" fill="#1434b8" stroke="#0c1c60" />
          <path d="M28 9q0-2 2-2t2 2-2 3m0 2v1" stroke="#fff" strokeWidth="2" fill="none" />
          <path d="M50 2h5v3h-5zM48 4h5v3h-5z" stroke="#fff" fill="none" />
          <path d="M49 14h5l-2 3z" fill="#fff" />
          <path d="M66 15l4-5 4 5z" fill="#e8eef4" stroke="#56687c" />
          <path d="M88 4v16M89 5q3-1 5 1t7 0v6q-4 2-7 0t-5 0z" stroke="#f4f8fc" strokeWidth="2" fill="#a8b8c8" />
          <path d="M115 7h8v12h-8zM117 5h4" stroke="#fff" strokeWidth="2" fill="#8094a8" />
          <path d="M117 11h4v6h-4z" fill="#fff" />
          <path d="M136 15h2v3h-2zM139 13h2v5h-2zM142 11h2v7h-2zM145 8h2v10h-2zM148 5h2v13h-2z" fill="#fff" stroke="#50606f" strokeWidth="0.5" />
          <path d="M159 9h3l4-4v14l-4-4h-3z" fill="#fff" stroke="#56687c" />
          <path d="M168 8q2 4 0 8M170 6q3 6 0 12" stroke="#fff" fill="none" />
        </svg>
        <div className={`mr-[10px] ml-5 text-center text-[12px] leading-[18px] ${uiFont}`}>
          <time className="block">21:40</time>
          <time className="block">2013/7/24</time>
        </div>
        <button aria-label="Show desktop" className="h-[39px] w-[14px] border border-[#607890] bg-linear-to-br from-[#b8cadb] to-[#8ca4bc]" />
      </div>
    </footer>
  );
}

const menus = ["File", "Edit", "View", "Place", "Design", "Tools", "Auto Route", "Reports", "Window", "Help"];

export default function App() {
  const captionBtn = "flex h-[17px] items-center justify-center";
  return (
    <div className="flex h-screen min-h-[600px] flex-col overflow-hidden bg-[#f0f0f0] text-black">
      <header className="flex h-[22px] shrink-0 items-start justify-between border-b border-[#5c6c80] bg-[linear-gradient(100deg,#d4e4f3_0,#c2d8ee_110px,#a9c6e2_160px,#b8d3ee_340px,#a6c3de_420px,#b5d2ec_760px,#a9cbe8_1100px,#b3d2ee_100%)]">
        <div className="flex h-[22px] items-center">
          <ProtelIcon size={16} />
          <h1 className={`ml-[5px] text-[12px] ${uiFont}`}>Design Explorer</h1>
        </div>
        <div className="mr-[3px] flex overflow-hidden rounded-b-md border border-t-0 border-[#4c5868]">
          <button aria-label="Minimize" className={`${captionBtn} w-7 border-r border-[#687888] bg-linear-to-b from-[#dce8f2] from-50% to-[#a4b8cc] to-50%`}><CaptionGlyph kind="min" /></button>
          <button aria-label="Restore" className={`${captionBtn} w-[27px] border-r border-[#687888] bg-linear-to-b from-[#dce8f2] from-50% to-[#a4b8cc] to-50%`}><CaptionGlyph kind="restore" /></button>
          <button aria-label="Close" className={`${captionBtn} w-[46px] bg-linear-to-b from-[#e09080] from-50% to-[#c43820] to-50%`}><CaptionGlyph kind="close" /></button>
        </div>
      </header>

      <nav className={`flex h-[19px] shrink-0 items-center gap-[15px] border-b border-[#b4b9cd] bg-[linear-gradient(#fff_0,#e8ecf6_6px,#d5dcee_7px,#dfe4f6_100%)] pt-0.5 pl-5 text-[12px] ${uiFont}`}>
        <button aria-label="Main menu" className="flex h-4 w-[26px] items-center justify-center bg-[#ececec]">
          <svg width="22" height="10" viewBox="0 0 22 10" aria-hidden>
            <path d="M6 0h10v3h6l-11 7L0 3h6z" fill="#909090" />
          </svg>
        </button>
        {menus.map((menu) => (
          <button key={menu} className="whitespace-nowrap">{menu}</button>
        ))}
      </nav>

      <div className="flex h-[29px] shrink-0 items-center gap-3 pl-[3px]" role="toolbar">
        {toolGroups.map((group, i) => (
          <div key={i} className="flex">
            {group.map((name) => (
              <button key={name} aria-label={name} className="flex h-[22px] w-[22px] items-center justify-center">
                <Icon shapes={toolIcons[name]} />
              </button>
            ))}
          </div>
        ))}
      </div>

      <main className="flex min-h-0 flex-1 gap-[7px] pr-1 pl-1">
        <ExplorerPanel />
        <div className="flex min-w-0 flex-1 border-t-2 border-r border-b border-l-2 border-t-[#707070] border-r-white border-b-white border-l-[#808080] bg-[#ababab] px-[3px] pt-[3px] pb-[3px]">
          <ChildWindow />
        </div>
      </main>

      <div className={`flex h-[29px] shrink-0 items-center pt-1 pr-1 pl-[9px] text-[14px] ${boldFont}`}>
        <StatusArrow color="#f8f000" shadow="#a09800" />
        <span className="ml-1 w-[153px] whitespace-nowrap">X:-4860mil Y:5500mil</span>
        <StatusArrow color="#fff" shadow="#a0a0a0" />
        <span className="w-[364px]" />
        <StatusArrow color="#fff" shadow="#a0a0a0" />
        <button aria-label="Help advisor" className="ml-auto flex h-[14px] w-[14px] items-center justify-center rounded-xs border border-black bg-[#ffffd8] text-[12px] leading-3 text-[#000080] shadow-[1px_1px_0_#606060]">?</button>
      </div>

      <Taskbar />
    </div>
  );
}
